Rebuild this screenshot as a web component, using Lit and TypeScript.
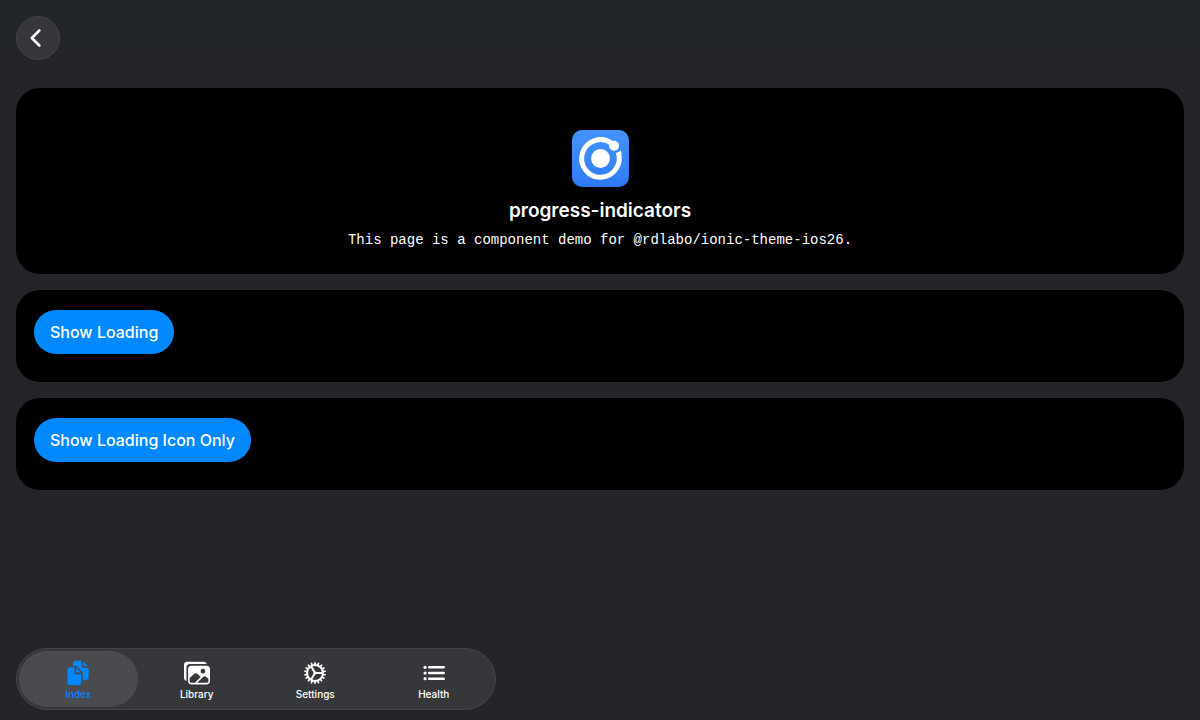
import { LitElement, html, css, svg } from "lit";
import { customElement, property, state } from "lit/decorators.js";

const TEETH = Array.from({ length: 18 }, (_, i) => i * 20);

const icons = {
  documents: svg`<path d="M298.39 248a4 4 0 002.86-6.8l-78.4-79.72a4 4 0 00-6.85 2.81V236a12 12 0 0012 12z"/><path d="M197 267a43.67 43.67 0 01-13-31v-92h-72a64.19 64.19 0 00-64 64v224a64 64 0 0064 64h144a64 64 0 0064-64V280h-92a43.61 43.61 0 01-31-13zM372 120h70.39a4 4 0 002.86-6.8l-78.4-79.72a4 4 0 00-6.85 2.81V108a12 12 0 0012 12z"/><path d="M372 152a44.34 44.34 0 01-44-44V16H220a60.07 60.07 0 00-60 60v36h42.12A40.81 40.81 0 01231 124.14l109.16 111a41.11 41.11 0 0111.83 29V400h53.05c32.51 0 58.95-26.92 58.95-60V152z"/>`,
  images: svg`<path d="M450.29 112H142c-34 0-62 27.51-62 61.33v245.34c0 33.82 28 61.33 62 61.33h308c34 0 62-26.18 62-60V173.33c0-33.82-27.68-61.33-61.71-61.33zm-77.15 61.34a46 46 0 11-46.28 46 46.19 46.19 0 0146.28-46.01zm-231.55 276c-17 0-29.86-13.75-29.86-30.66v-64.83l90.46-80.79a46.54 46.54 0 0163.44 1.83L328.27 337l-113 112.33zM480 418.67a30.67 30.67 0 01-30.71 30.66H259L376.08 333a46.24 46.24 0 0159.44-.16L480 370.59z"/><path d="M384 32H64A64 64 0 000 96v256a64.11 64.11 0 0048 62V152a72 72 0 0172-72h326a64.11 64.11 0 00-62-48z"/>`,
  cog: svg`<g fill="none" stroke="currentColor" stroke-width="40"><circle cx="256" cy="256" r="156"/><path d="M256 256h150M256 256l-75-130M256 256l-75 130"/></g><circle cx="256" cy="256" r="28"/>${TEETH.map(
    (a) => svg`<path d="M236 92l6-50q14-10 28 0l6 50z" transform="rotate(${a} 256 256)"/>`
  )}`,
  list: svg`<g fill="none" stroke="currentColor" stroke-width="48" stroke-linecap="round"><path d="M160 144h288M160 256h288M160 368h288"/></g><circle cx="80" cy="144" r="32"/><circle cx="80" cy="256" r="32"/><circle cx="80" cy="368" r="32"/>`,
};

@customElement("demo-card")
class DemoCard extends LitElement {
  static styles = css`
    :host {
      display: block;
      background: #000;
      border-radius: 24px;
      padding: 20px 18px 28px;
    }
  `;
  render() {
    return html`<slot></slot>`;
  }
}

@customElement("demo-button")
class DemoButton extends LitElement {
  @property() label = "";
  static styles = css`
    :host {
      display: flex;
    }
    .button {
      font: 450 16px/20px Inter, sans-serif;
      color: #fff;
      background: #0088ff;
      border: 0;
      border-radius: 22px;
      padding: 12px 16px;
      cursor: pointer;
    }
  `;
  render() {
    return html`<button class="button" type="button">${this.label}</button>`;
  }
}

@customElement("app-root")
class AppRoot extends LitElement {
  @state() private selected = "Index";

  private tabs = [
    { label: "Index", icon: icons.documents },
    { label: "Library", icon: icons.images },
    { label: "Settings", icon: icons.cog },
    { label: "Health", icon: icons.list },
  ];

  static styles = css`
    :host {
      display: flex;
      flex-direction: column;
      box-sizing: border-box;
      min-height: 100vh;
      padding: 16px 16px 10px;
      background: linear-gradient(#212629, #242529 88px);
      color: #fff;
      font-family: Inter, sans-serif;
    }
    .back {
      width: 44px;
      height: 44px;
      box-sizing: border-box;
      padding: 0;
      display: grid;
      place-items: center;
      color: inherit;
      background: #36373a;
      border: 1px solid #424346;
      border-radius: 50%;
      cursor: pointer;
    }
    .chevron {
      width: 24px;
      height: 24px;
      margin-right: 4px;
      fill: none;
      stroke: currentColor;
      stroke-width: 56;
      stroke-linecap: round;
      stroke-linejoin: round;
    }
    .content {
      flex: 1;
      display: flex;
      flex-direction: column;
      gap: 16px;
      padding: 28px 0 16px;
    }
    .lead {
      padding: 42px 18px 25px;
    }
    .intro {
      display: flex;
      flex-direction: column;
      align-items: center;
      text-align: center;
    }
    .logo {
      width: 57px;
      height: 57px;
    }
    .title {
      margin: 12px 0 0;
      font-size: 19px;
      line-height: 24px;
      font-weight: 600;
    }
    .description {
      margin: 8px 0 0;
      font: 14px/18px Courier, "Liberation Mono", monospace;
    }
    .tabs {
      box-sizing: border-box;
      width: 100%;
      max-width: 480px;
      display: grid;
      grid-template-columns: repeat(4, 1fr);
      padding: 2px;
      background: #36373a;
      border: 1px solid #424346;
      border-radius: 31px;
    }
    .tab {
      display: flex;
      flex-direction: column;
      align-items: center;
      gap: 1px;
      padding: 9px 0 6px;
      border: 0;
      border-radius: 28px;
      background: none;
      color: inherit;
      font: 500 10px/14px Inter, sans-serif;
      cursor: pointer;
    }
    .tab.selected {
      background: #4a4b4e;
      color: #0088ff;
    }
    .icon {
      width: 26px;
      height: 26px;
      fill: currentColor;
    }
  `;

  render() {
    return html`
      <header>
        <button class="back" type="button" aria-label="Back">
          <svg class="chevron" viewBox="0 0 512 512"><path d="M328 96L168 256l160 160" /></svg>
        </button>
      </header>
      <main class="content">
        <demo-card class="lead">
          <div class="intro">
            <svg class="logo" viewBox="0 0 57 57">
              <defs>
                <linearGradient id="blue" x1="0" y1="0" x2="0" y2="1">
                  <stop offset="0" stop-color="#4593fd" />
                  <stop offset="1" stop-color="#2f7af5" />
                </linearGradient>
              </defs>
              <rect width="57" height="57" rx="10" fill="url(#blue)" />
              <circle cx="28.5" cy="28.5" r="9.4" fill="#fff" />
              <path d="M39.5 13.2A18.8 18.8 0 1 0 46.2 22.2" fill="none" stroke="#fff" stroke-width="5" />
              <path d="M43.8 23.6Q47.5 22.6 48.8 20.6L49.6 24z" fill="#fff" />
              <circle cx="42" cy="15.8" r="5" fill="#fff" />
            </svg>
            <h1 class="title">progress-indicators</h1>
            <p class="description">This page is a component demo for @rdlabo/ionic-theme-ios26.</p>
          </div>
        </demo-card>
        <demo-card><demo-button label="Show Loading"></demo-button></demo-card>
        <demo-card><demo-button label="Show Loading Icon Only"></demo-button></demo-card>
      </main>
      <nav class="tabs" aria-label="Tabs">
        ${this.tabs.map(
          (tab) => html`<button
            type="button"
            class="tab ${tab.label === this.selected ? "selected" : ""}"
            @click=${() => (this.selected = tab.label)}
          >
            <svg class="icon" viewBox="0 0 512 512">${tab.icon}</svg>
            <span>${tab.label}</span>
          </button>`
        )}
      </nav>
    `;
  }
}
